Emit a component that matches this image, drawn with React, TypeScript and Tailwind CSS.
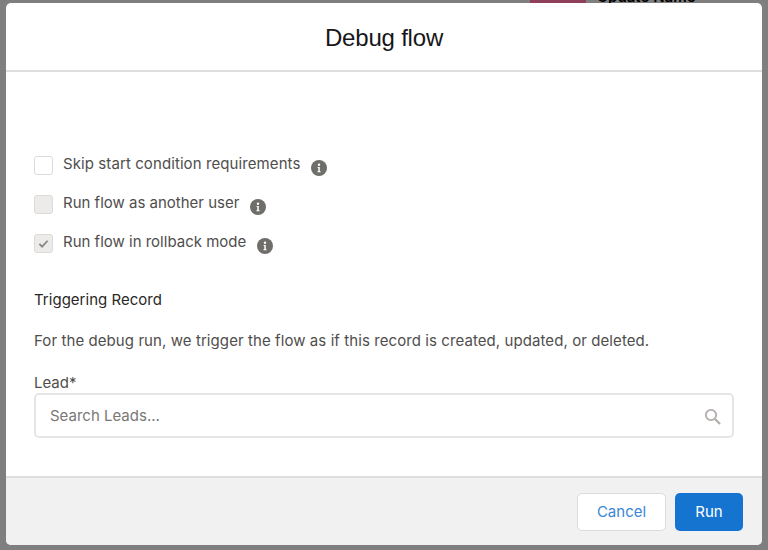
import React from "react";

const Info = () => (
  <svg width="16" height="16" viewBox="0 0 16 16" className="shrink-0">
    <circle cx="8" cy="8" r="8" fill="#706e6b" />
    <circle cx="8" cy="4.8" r="1.2" fill="#fff" />
    <path d="M6.6 7h2.2v4.2h.8v1H6.4v-1h.9V8h-.7z" fill="#fff" />
  </svg>
);

const Row = ({ label, box, track, check }: { label: string; box: string; track: string; check?: boolean }) => (
  <div className="flex items-center h-[20px]">
    <span className={`w-[19px] h-[19px] rounded-[3px] border border-[#dddbda] flex items-center justify-center shrink-0 ${box}`}>
      {check && (
        <svg width="11" height="11" viewBox="0 0 12 12">
          <path d="M1.5 6.5 4.5 9.5 10.5 3" fill="none" stroke="#8a8886" strokeWidth="2" />
        </svg>
      )}
    </span>
    <span className={`ml-[10px] -mt-[1px] text-[#4f4e4c] text-[15px] whitespace-nowrap ${track}`}>{label}</span>
    <span className="ml-[11px] mt-[6px]"><Info /></span>
  </div>
);

export default function App() {
  return (
    <div className="relative w-[768px] h-[550px] overflow-hidden bg-[#7f7f7f] pt-[3px] px-[6px] font-['Inter','Liberation_Sans',sans-serif]">
      <div className="absolute top-0 left-[530px] flex items-start">
        <div className="w-[56px] h-[3px] bg-[#8f3f57]" />
        <div className="ml-[11px] h-[3px] overflow-hidden">
          <div className="-mt-[11px] text-[15px] font-semibold leading-[16px] text-black whitespace-nowrap">Update Name</div>
        </div>
      </div>
      <div className="relative h-[542px] rounded-[5px] bg-white flex flex-col overflow-hidden">
        <div className="h-[69px] border-b-2 border-[#dfdedd] flex items-center justify-center pt-[2px]">
          <h1 className="text-[24px] leading-none tracking-[-0.2px] text-[#16161a] font-['Liberation_Sans',sans-serif]">Debug flow</h1>
        </div>
        <div className="flex-1 px-[28px] pt-[83px]">
          <div className="flex flex-col gap-[19px]">
            <Row label="Skip start condition requirements" box="bg-white" track="tracking-[0.09px]" />
            <Row label="Run flow as another user" box="bg-[#ecebea]" track="tracking-normal" />
            <Row label="Run flow in rollback mode" box="bg-[#ecebea]" track="tracking-normal" check />
          </div>
          <div className="mt-[37px] text-[15px] leading-[20px] text-[#2b2826] tracking-[0.02px]">Triggering Record</div>
          <p className="mt-[21px] text-[15px] leading-[20px] text-[#4f4e4c] tracking-[0.08px] whitespace-nowrap">
            For the debug run, we trigger the flow as if this record is created, updated, or deleted.
          </p>
          <div className="mt-[22px] text-[15px] leading-[20px] text-[#4f4e4c]">Lead*</div>
          <div className="h-[45px] rounded-[5px] border-2 border-[#e6e5e4] flex items-center justify-between pl-[14px] pr-[11px] pt-[2px]">
            <span className="text-[15px] text-[#7a7876]">Search Leads...</span>
            <svg width="17" height="17" viewBox="0 0 17 17" fill="none" stroke="#b0adab">
              <circle cx="7" cy="7" r="5.2" strokeWidth="1.8" />
              <path d="M11 11l5 5" strokeWidth="2.2" />
            </svg>
          </div>
        </div>
        <div className="h-[69px] border-t-2 border-[#dfdddd] bg-[#f1f1f1] flex items-start justify-end gap-[9px] pt-[15px] pr-[19px]">
          <button className="w-[89px] h-[38px] rounded-[5px] border border-[#dddbda] bg-white text-[15px] text-[#3a86d8]">Cancel</button>
          <button className="w-[68px] h-[38px] rounded-[5px] bg-[#1474d0] text-[15px] text-white">Run</button>
        </div>
      </div>
    </div>
  );
}
